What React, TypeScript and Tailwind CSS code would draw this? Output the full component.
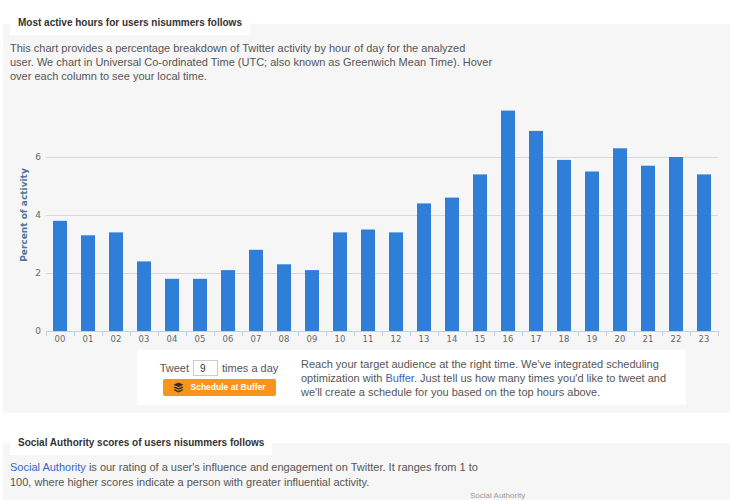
import React from 'react';

const values = [3.8, 3.3, 3.4, 2.4, 1.8, 1.8, 2.1, 2.8, 2.3, 2.1, 3.4, 3.5, 3.4, 4.4, 4.6, 5.4, 7.6, 6.9, 5.9, 5.5, 6.3, 5.7, 6.0, 5.4];

// chart coordinates (svg space)
const left = 43;
const step = 28;
const base = 243;
const unit = 29;

const ActivityChart: React.FC = () => (
  <svg width={727} height={262} className="block">
    {[0, 2, 4, 6].map((v) => (
      <g key={v}>
        {v > 0 && (
          <line x1={left} x2={left + step * 24} y1={base - v * unit + 0.5} y2={base - v * unit + 0.5} stroke="#d8d8d8" strokeWidth={1} />
        )}
        <text x={38} y={base - v * unit + 3} textAnchor="end" fontSize={9} fill="#666" fontFamily="'DejaVu Sans', sans-serif">
          {v}
        </text>
      </g>
    ))}
    <text
      transform="translate(24 127) rotate(-90)"
      textAnchor="middle"
      fontSize={9}
      fontWeight="bold"
      fill="#4d759e"
      fontFamily="'DejaVu Sans', sans-serif"
    >
      Percent of activity
    </text>
    {values.map((v, i) => {
      const h = v * unit;
      return (
        <g key={i}>
          <rect x={left + i * step + 7} y={base - h} width={14} height={h} fill="#2f7ed8" />
          <text
            x={left + i * step + 14}
            y={base + 11}
            textAnchor="middle"
            fontSize={8.5}
            fill="#666"
            fontFamily="'DejaVu Sans', sans-serif"
          >
            {String(i).padStart(2, '0')}
          </text>
        </g>
      );
    })}
    <line x1={left} x2={left + step * 24} y1={base + 0.5} y2={base + 0.5} stroke="#c0d0e0" strokeWidth={1} />
    {Array.from({ length: 25 }).map((_, i) => (
      <line key={i} x1={left + i * step + 0.5} x2={left + i * step + 0.5} y1={base} y2={base + 5} stroke="#c0d0e0" strokeWidth={1} />
    ))}
  </svg>
);

const BufferIcon: React.FC = () => (
  <svg width={11} height={11} viewBox="0 0 12 12" className="shrink-0">
    <path d="M6 0.5 L11.5 3 L6 5.5 L0.5 3 Z" fill="#2d2d2d" />
    <path d="M2.2 5 L6 6.8 L9.8 5 L11.5 5.9 L6 8.4 L0.5 5.9 Z" fill="#2d2d2d" />
    <path d="M2.2 7.9 L6 9.7 L9.8 7.9 L11.5 8.8 L6 11.4 L0.5 8.8 Z" fill="#2d2d2d" />
  </svg>
);

const SectionTab: React.FC<{ title: string }> = ({ title }) => (
  <div className="relative z-10 ml-[10px] flex h-[25px] w-fit items-center whitespace-nowrap bg-white px-[8px] text-[10px] font-bold text-[#333]">
    {title}
  </div>
);

export default function App() {
  return (
    <div className="h-[500px] w-[730px] overflow-hidden bg-white font-['Liberation_Sans',Arial,sans-serif]">
      <div className="pt-[10px]">
        <SectionTab title="Most active hours for users nisummers follows" />
        <div className="-mt-[11px] ml-[3px] bg-[#f6f6f6] pb-[8px] pt-[17px]">
          <p className="px-[7px] text-[11px] leading-[14px] text-[#555]">
            This chart provides a percentage breakdown of Twitter activity by hour of day for the analyzed
            <br />
            user. We chart in Universal Co-ordinated Time (UTC; also known as Greenwich Mean Time). Hover
            <br />
            over each column to see your local time.
          </p>
          <div className="mt-[5px]">
            <ActivityChart />
          </div>
          <div className="ml-[134px] flex h-[55px] w-[549px] bg-white">
            <div className="flex w-[164px] flex-col items-center pt-[10px]">
              <div className="flex items-center gap-[4px] text-[11px] text-[#555]">
                <span>Tweet</span>
                <span className="flex h-[16px] w-[25px] items-center border border-[#ccc] pl-[6px] text-[10px] text-[#333]">9</span>
                <span>times a day</span>
              </div>
              <div className="mt-[2px] flex h-[17px] w-[113px] items-center gap-[7px] rounded-[2px] bg-[#f7941d] pl-[10px] text-[8.5px] font-bold text-white">
                <BufferIcon />
                <span>Schedule at Buffer</span>
              </div>
            </div>
            <p className="pt-[7px] text-[11px] leading-[14px] text-[#555]">
              Reach your target audience at the right time. We've integrated scheduling
              <br />
              optimization with <span className="text-[#3366cc]">Buffer</span>. Just tell us how many times you'd like to tweet and
              <br />
              we'll create a schedule for you based on the top hours above.
            </p>
          </div>
        </div>
      </div>
      <div className="pt-[17px]">
        <SectionTab title="Social Authority scores of users nisummers follows" />
        <div className="-mt-[12px] ml-[3px] h-[80px] bg-[#f6f6f6] pt-[17px]">
          <p className="px-[7px] text-[11px] leading-[15px] text-[#555]">
            <span className="text-[#3366cc]">Social Authority</span> is our rating of a user's influence and engagement on Twitter. It ranges from 1 to
            <br />
            100, where higher scores indicate a person with greater influential activity.
          </p>
          <div className="mt-[1px] pl-[467px] text-[8px] leading-[10px] text-[#999]">Social Authority</div>
        </div>
      </div>
    </div>
  );
}
